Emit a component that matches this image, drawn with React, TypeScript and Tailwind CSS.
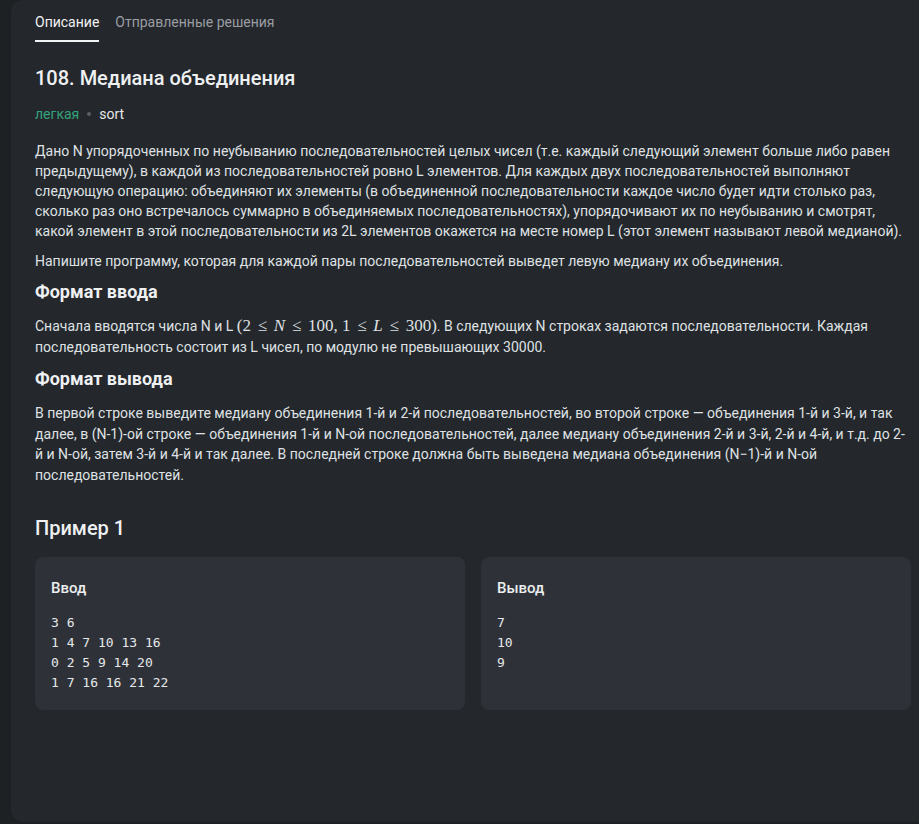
const SANS = "font-['Roboto','Noto_Sans',sans-serif]";
const MONO = "font-['DejaVu_Sans_Mono','Liberation_Mono',monospace]";
const SERIF = "font-['Liberation_Serif','DejaVu_Serif',serif]";

function ExampleCard({ title, lines }: { title: string; lines: string[] }) {
  return (
    <div className="rounded-lg bg-[#2e3238] px-4 pt-[20px] pb-[17px]">
      <h4 className="text-[15px] leading-[22px] font-medium text-[#eceef0]">{title}</h4>
      <pre className={`mt-[14px] text-[13px] leading-[20px] text-[#e6e8ea] ${MONO}`}>
        {lines.join('\n')}
      </pre>
    </div>
  );
}

export default function App() {
  return (
    <div className={`h-[824px] w-[919px] overflow-hidden bg-[#1e2124] pl-[11px] ${SANS}`}>
      <div className="h-[822px] w-[924px] rounded-xl bg-[#24272b] px-6">
        <nav className="flex gap-4 text-[14px] leading-[20px]">
          <div className="flex flex-col pt-[12px]">
            <span className="text-[#f2f3f5]">Описание</span>
            <span className="mt-[8px] h-[2px] bg-[#f2f3f5]" />
          </div>
          <span className="pt-[12px] text-[#9a9ea4]">Отправленные решения</span>
        </nav>

        <h1 className="mt-[22px] text-[20px] leading-[28px] font-medium text-[#eef0f2]">
          108. Медиана объединения
        </h1>

        <div className="mt-[12px] flex items-center text-[14px] leading-[20px]">
          <span className="text-[#33a37b]">легкая</span>
          <span className="mx-[8px] h-[4px] w-[4px] rounded-full bg-[#5b6068]" />
          <span className="text-[#e6e8ea]">sort</span>
        </div>

        <div className="mt-[17px] text-[14px] leading-[20px] text-[#dfe1e4]">
          <p>
            Дано N упорядоченных по неубыванию последовательностей целых чисел (т.е. каждый следующий элемент больше либо
            равен предыдущему), в каждой из последовательностей ровно L элементов. Для каждых двух последовательностей
            выполняют следующую операцию: объединяют их элементы (в объединенной последовательности каждое число будет
            идти столько раз, сколько раз оно встречалось суммарно в объединяемых последовательностях), упорядочивают их
            по неубыванию и смотрят, какой элемент в этой последовательности из 2L элементов окажется на месте номер L
            (этот элемент называют левой медианой).
          </p>
          <p className="mt-[10px]">
            Напишите программу, которая для каждой пары последовательностей выведет левую медиану их объединения.
          </p>

          <h3 className="mt-[8px] text-[18px] leading-[26px] font-bold text-[#eef0f2]">Формат ввода</h3>
          <p className="mt-[10px] leading-[21px]">
            Сначала вводятся числа N и L{' '}
            <span className={`${SERIF} text-[17px] whitespace-nowrap`}>
              (2<span className="px-[2.5px]"> ≤ </span><i>N</i><span className="px-[2.5px]"> ≤ </span>100, 1
              <span className="px-[2.5px]"> ≤ </span><i>L</i><span className="px-[2.5px]"> ≤ </span>300)
            </span>
            . В следующих N строках задаются последовательности. Каждая последовательность состоит из L чисел, по модулю не
            превышающих 30000.
          </p>

          <h3 className="mt-[8px] text-[18px] leading-[26px] font-bold text-[#eef0f2]">Формат вывода</h3>
          <p className="mt-[11px] leading-[20.7px]">
            В первой строке выведите медиану объединения 1-й и 2-й последовательностей, во второй строке — объединения 1-й
            и 3-й, и так далее, в (N-1)-ой строке — объединения 1-й и N-ой последовательностей, далее медиану объединения
            2-й и 3-й, 2-й и 4-й, и т.д. до 2-й и N-ой, затем 3-й и 4-й и так далее. В последней строке должна быть
            выведена медиана объединения (N−1)-й и N-ой последовательностей.
          </p>
        </div>

        <h2 className="mt-[28px] text-[20px] leading-[28px] font-medium text-[#eef0f2]">Пример 1</h2>

        <div className="mt-[15px] grid w-[876px] grid-cols-2 gap-4">
          <ExampleCard title="Ввод" lines={['3 6', '1 4 7 10 13 16', '0 2 5 9 14 20', '1 7 16 16 21 22']} />
          <ExampleCard title="Вывод" lines={['7', '10', '9']} />
        </div>
      </div>
    </div>
  );
}
